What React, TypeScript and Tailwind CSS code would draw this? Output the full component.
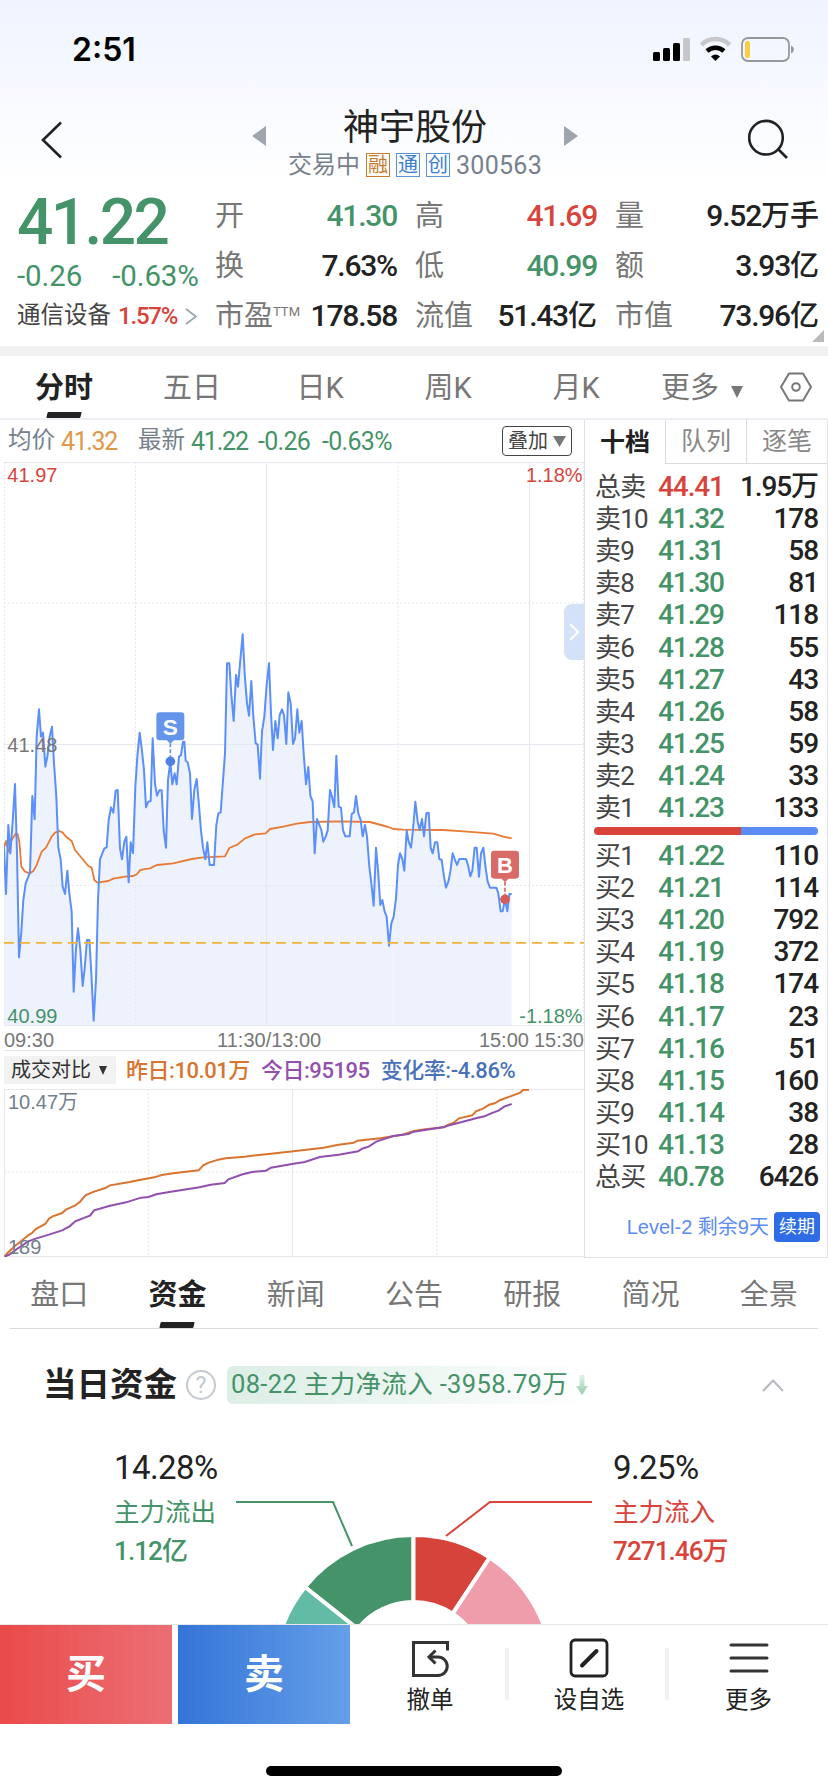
import React, { useState } from 'react';

interface Quote {
  label: string;
  price: string;
  volume: string;
  tone?: 'up' | 'down';
}

interface Stat {
  label: string;
  sup?: string;
  value: string;
  unit?: string;
  color?: string;
}

const stats: Stat[][] = [
  [
    { label: '开', value: '41.30', color: 'text-[#459368]' },
    { label: '换', value: '7.63%' },
    { label: '市盈', sup: 'TTM', value: '178.58' },
  ],
  [
    { label: '高', value: '41.69', color: 'text-[#d8443c]' },
    { label: '低', value: '40.99', color: 'text-[#459368]' },
    { label: '流值', value: '51.43', unit: '亿' },
  ],
  [
    { label: '量', value: '9.52', unit: '万手' },
    { label: '额', value: '3.93', unit: '亿' },
    { label: '市值', value: '73.96', unit: '亿' },
  ],
];

const statWidths = ['w-[182px]', 'w-[182px]', 'w-[204px]'];

const sells: Quote[] = [
  { label: '总卖', price: '44.41', volume: '1.95万', tone: 'up' },
  { label: '卖10', price: '41.32', volume: '178' },
  { label: '卖9', price: '41.31', volume: '58' },
  { label: '卖8', price: '41.30', volume: '81' },
  { label: '卖7', price: '41.29', volume: '118' },
  { label: '卖6', price: '41.28', volume: '55' },
  { label: '卖5', price: '41.27', volume: '43' },
  { label: '卖4', price: '41.26', volume: '58' },
  { label: '卖3', price: '41.25', volume: '59' },
  { label: '卖2', price: '41.24', volume: '33' },
  { label: '卖1', price: '41.23', volume: '133' },
];

const buys: Quote[] = [
  { label: '买1', price: '41.22', volume: '110' },
  { label: '买2', price: '41.21', volume: '114' },
  { label: '买3', price: '41.20', volume: '792' },
  { label: '买4', price: '41.19', volume: '372' },
  { label: '买5', price: '41.18', volume: '174' },
  { label: '买6', price: '41.17', volume: '23' },
  { label: '买7', price: '41.16', volume: '51' },
  { label: '买8', price: '41.15', volume: '160' },
  { label: '买9', price: '41.14', volume: '38' },
  { label: '买10', price: '41.13', volume: '28' },
  { label: '总买', price: '40.78', volume: '6426' },
];

const periodTabs = ['分时', '五日', '日K', '周K', '月K'];
const depthTabs = ['十档', '队列', '逐笔'];
const infoTabs = ['盘口', '资金', '新闻', '公告', '研报', '简况', '全景'];

// chart space is 3 units per pixel
const priceLine =
  '12,680 18,822 25,615 31,700 38,605 45,492 51,700 57,1012 64,935 70,840 77,790 90,757 97,528 104,598 110,350 117,268 123,350 129,338 136,440 142,410 149,350 156,320 162,430 169,530 175,683 182,718 188,800 195,822 202,752 208,820 215,875 221,1115 228,985 234,925 241,990 248,1098 254,1045 261,960 268,960 274,1060 281,1202 288,1080 294,840 300,718 313,685 320,682 326,600 333,562 340,578 347,512 353,510 360,685 366,718 373,665 379,650 386,787 392,667 399,700 406,500 412,410 419,338 425,385 432,450 438,562 445,545 452,543 458,355 465,492 471,527 478,511 485,511 491,630 498,683 504,480 511,425 517,493 524,460 530,493 537,410 543,405 549,365 553,365 557,422 563,427 570,460 576,597 583,510 590,477 596,545 603,632 609,683 616,718 622,667 629,735 642,735 649,615 655,580 662,577 668,495 675,400 681,130 688,130 694,225 701,303 708,165 714,200 721,120 728,43 734,160 741,250 747,287 754,183 760,290 767,370 773,374 780,476 786,335 793,290 800,195 807,130 813,280 819,390 826,303 833,355 839,285 846,268 852,285 859,372 865,217 872,250 879,372 885,355 892,268 898,338 905,303 911,400 918,493 925,441 931,527 938,545 944,700 951,597 957,612 964,630 970,665 977,650 983,632 990,510 996,530 1003,562 1009,407 1016,560 1023,563 1029,630 1036,649 1049,649 1055,582 1062,577 1068,528 1075,580 1082,600 1088,649 1095,615 1101,650 1108,740 1114,790 1121,857 1128,683 1134,750 1141,855 1147,840 1154,875 1160,890 1167,977 1174,910 1181,890 1188,835 1194,735 1200,700 1207,717 1213,752 1220,632 1226,665 1233,683 1239,630 1246,545 1253,605 1259,630 1266,597 1272,649 1279,580 1286,578 1292,683 1298,700 1305,667 1312,667 1318,717 1325,720 1332,770 1338,803 1345,785 1351,755 1358,700 1364,717 1371,735 1378,717 1398,717 1404,735 1411,769 1417,752 1424,683 1430,683 1437,770 1443,700 1450,683 1457,745 1463,785 1470,803 1489,803 1495,820 1502,874 1508,874 1515,838 1522,874 1528,822 1535,822';

const averageLine =
  '12,683 18,663 25,695 35,660 48,640 53,643 58,665 64,740 75,755 90,760 100,753 110,735 125,695 138,683 155,650 165,638 178,633 188,638 198,650 215,663 225,690 240,708 265,738 275,743 283,780 292,788 325,783 340,776 375,770 400,768 410,763 420,751 430,748 450,745 470,735 520,730 575,717 610,712 675,709 688,684 712,674 735,655 765,643 797,640 810,627 850,620 890,611 930,606 1020,604 1110,606 1165,621 1180,627 1210,629 1330,630 1390,634 1480,641 1510,650 1535,655';

const yesterdayLine =
  '12,741 20,730 40,708 50,700 75,677 85,670 95,658 120,643 130,627 140,620 165,610 175,600 200,587 212,577 228,556 250,546 280,535 292,527 345,517 360,513 410,503 430,496 460,491 528,482 540,467 555,459 580,450 600,446 650,441 720,432 780,425 860,414 880,410 900,405 940,399 950,393 1010,386 1070,375 1100,364 1130,359 1180,353 1190,346 1205,340 1220,326 1255,317 1265,305 1285,296 1300,285 1315,281 1330,271 1383,249 1390,241 1406,240';

const todayLine =
  '12,741 25,735 45,718 75,695 95,687 130,675 165,662 185,650 200,635 240,617 250,602 290,589 335,578 375,564 395,562 415,554 450,547 530,533 560,525 597,520 607,509 645,494 670,487 707,483 720,474 780,462 810,457 850,442 900,435 952,425 962,417 980,411 1000,396 1045,379 1085,373 1100,366 1180,352 1200,345 1270,324 1288,320 1305,311 1325,303 1340,291 1360,283';

const StatusBar: React.FC = () => (
  <div className="flex h-[98px] items-center justify-between pl-[72px] pr-[34px]">
    <span className="mt-[2px] font-['Inter'] text-[32px] font-semibold leading-none text-black">2:51</span>
    <svg width="142" height="26" viewBox="0 0 142 26">
      <rect x="1" y="16" width="7" height="9" rx="1.5" />
      <rect x="11" y="12" width="7" height="13" rx="1.5" />
      <rect x="21" y="7" width="7" height="18" rx="1.5" />
      <rect x="31" y="2" width="7" height="23" rx="1.5" fill="#c5c7cb" />
      <path d="M49.500 8.800A20 20 0 0 1 77.500 8.800" fill="none" stroke="#c5c7cb" strokeWidth="4.5" />
      <path d="M55 15A12.500 12.500 0 0 1 72 15" fill="none" stroke="#000" strokeWidth="4.5" />
      <path d="M59 20.500Q63.500 16.500 68 20.500L63.500 25z" />
      <rect x="90" y="2" width="47" height="23" rx="6" fill="none" stroke="#96989c" strokeWidth="1.8" />
      <rect x="93" y="5" width="5" height="17" rx="2" fill="#f7ce46" />
      <path d="M139 9.500Q142 11 142 13.500Q142 16 139 17.500z" fill="#96989c" />
    </svg>
  </div>
);

const TitleBar: React.FC = () => (
  <header className="flex h-[88px] items-start justify-between pl-[39px] pr-[36px]">
    <svg className="mt-[23px]" width="26" height="38" viewBox="0 0 26 38" fill="none" stroke="#222" strokeWidth="2.6">
      <path d="M22 1.500L4 19L22 36.500" />
    </svg>
    <div className="ml-[17px] flex flex-col items-center">
      <div className="flex items-center">
        <svg width="14" height="20" viewBox="0 0 14 20" className="mt-[23px]">
          <path d="M14 0V20L0 10z" fill="#9ea5ad" />
        </svg>
        <h1 className="mx-[77px] mt-[11px] h-[42px] text-[36px] leading-[38px] text-[#222]">神宇股份</h1>
        <svg width="14" height="20" viewBox="0 0 14 20" className="mt-[23px]">
          <path d="M0 0V20L14 10z" fill="#9ea5ad" />
        </svg>
      </div>
      <div className="mt-[2px] flex h-[24px] items-center gap-[6px] text-[24px] leading-none text-[#76818c]">
        <span>交易中</span>
        <span className="flex h-[24px] w-[24px] items-center justify-center border border-[#c47b2e] text-[20px] text-[#c47b2e]">融</span>
        <span className="flex h-[24px] w-[24px] items-center justify-center border border-[#5b93d8] text-[20px] text-[#3b7fd0]">通</span>
        <span className="flex h-[24px] w-[24px] items-center justify-center border border-[#5b93d8] text-[20px] text-[#3b7fd0]">创</span>
        <span className="text-[25px] tracking-[0.3px]">300563</span>
      </div>
    </div>
    <svg className="mt-[20px]" width="44" height="44" viewBox="0 0 44 44" fill="none" stroke="#222" strokeWidth="2.6">
      <circle cx="18" cy="19.700" r="16.800" />
      <path d="M30.500 31.500L39 40" />
    </svg>
  </header>
);

const Summary: React.FC = () => (
  <section className="relative flex h-[160px] pl-[17px] pt-[5px]">
    <div className="w-[198px]">
      <div className="h-[76px] text-[64px] font-medium leading-[64px] tracking-[-2.6px] text-[#459368]">41.22</div>
      <div className="-mt-[7px] flex h-[32px] items-center gap-[32px] text-[29.500px] leading-[32px] tracking-[-0.1px] text-[#459368]">
        <span className="-mr-[2px]">-0.26</span>
        <span>-0.63%</span>
      </div>
      <div className="mt-[9px] flex h-[30px] items-center text-[23.500px] leading-none text-[#444]">
        通信设备
        <span className="ml-[7px] text-[24px] font-medium tracking-[-1.2px] text-[#d8443c]">1.57%</span>
        <svg className="ml-[8px]" width="12" height="17" viewBox="0 0 12 17" fill="none" stroke="#9aa2ad" strokeWidth="1.600">
          <path d="M1 1L11 8.500L1 16" />
        </svg>
      </div>
    </div>
    <div className="flex gap-[18px]">
      {stats.map((column, i) => (
        <div key={i} className={statWidths[i]}>
          {column.map(stat => (
            <div key={stat.label} className="flex h-[50px] items-center justify-between leading-none">
              <span className="flex text-[29px] text-[#777]">
                {stat.label}
                {stat.sup && <sup className="top-0 mt-[3px] text-[13px] leading-none">{stat.sup}</sup>}
              </span>
              <span className={`flex items-center text-[30px] font-medium tracking-[-1.2px] ${stat.color ?? 'text-[#222]'}`}>
                {stat.value}
                {stat.unit && <span className="text-[29px] tracking-normal">{stat.unit}</span>}
              </span>
            </div>
          ))}
        </div>
      ))}
    </div>
    <svg className="absolute bottom-[4px] right-[4px]" width="12" height="12" viewBox="0 0 12 12">
      <path d="M12 0V12H0z" fill="#bbb" />
    </svg>
  </section>
);

const TabMark: React.FC = () => <span className="absolute bottom-0 h-[6px] w-[34px] -skew-x-[14deg] rounded-[1px] bg-[#222]" />;

const PeriodTabs: React.FC = () => {
  const [active, setActive] = useState('分时');

  return (
    <nav className="flex h-[64px] border-b-2 border-[#eeeff4] text-[29px] leading-none text-[#777]">
      {periodTabs.map(tab => (
        <button
          key={tab}
          onClick={() => setActive(tab)}
          className={`relative flex w-[128px] items-center justify-center pt-[3px] ${active === tab ? 'font-bold text-[#222]' : ''}`}
        >
          {tab}
          {active === tab && <TabMark />}
        </button>
      ))}
      <button className="ml-[21px] flex items-center pt-[3px]">
        更多
        <svg className="ml-[12px] mt-[6px]" width="12" height="12" viewBox="0 0 12 12">
          <path d="M0 0H12L6 12z" fill="#777" />
        </svg>
      </button>
      <button className="ml-[37px] flex items-center">
        <svg width="32" height="30" viewBox="0 0 32 30" fill="none" stroke="#777" strokeWidth="2" strokeLinejoin="round">
          <path d="M9 1.500H23L31 15L23 28.500H9L1 15z" />
          <circle cx="16" cy="15" r="3.800" />
        </svg>
      </button>
    </nav>
  );
};

const PriceChart: React.FC = () => (
  <div className="relative h-[565px]">
    <svg width="580" height="564" viewBox="12 -474 1740 1692" className="ml-[4px] block font-['Liberation_Sans']">
      <polygon points={`12,1218 ${priceLine} 1535,1218`} fill="#edf2fd" />
      <g stroke="#e6e8f0" strokeWidth="3" fill="none">
        <path d="M12 -472.500H1752M12 373.500H1752M12 1217H1752M799.500 -474V1218M1588.500 -474V1218" />
        <path d="M12 -51H1752M12 796.500H1752M13.500 -474V1218M406.500 -474V1218M1194 -474V1218M1750.500 -474V1218" strokeDasharray="6 6" />
      </g>
      <polyline points={averageLine} fill="none" stroke="#e87b35" strokeWidth="5.500" strokeLinejoin="round" />
      <polyline points={priceLine} fill="none" stroke="#5b8ff9" strokeWidth="6" strokeLinejoin="round" />
      <path d="M12 968.500H1752" stroke="#f3b13c" strokeWidth="5.500" strokeDasharray="30 18" />

      <g fontSize="60" fill="#777">
        <text x="22" y="-414" fill="#d8443c">41.97</text>
        <text x="22" y="396">41.48</text>
        <text x="22" y="1210" fill="#459368">40.99</text>
        <text x="1748" y="-414" fill="#d8443c" textAnchor="end">1.18%</text>
        <text x="1748" y="1210" fill="#459368" textAnchor="end">-1.18%</text>
      </g>

      <path d="M511 370V412" stroke="#6495ea" strokeWidth="5" strokeDasharray="12 6" />
      <circle cx="511" cy="424" r="14.500" fill="#4f82e0" />
      <path d="M499 359H523L511 371z" fill="#6495ea" />
      <rect x="469" y="277" width="84" height="84" rx="10" fill="#6495ea" />
      <text x="511" y="345" textAnchor="middle" fontSize="68" fontWeight="700" fill="#fff">S</text>

      <path d="M1515 785V826" stroke="#d86a67" strokeWidth="5" strokeDasharray="12 6" />
      <circle cx="1515" cy="838" r="14.500" fill="#d65c5a" />
      <path d="M1503 775H1527L1515 787z" fill="#d86a67" />
      <rect x="1473" y="692" width="84" height="84" rx="10" fill="#d86a67" />
      <text x="1515" y="760" textAnchor="middle" fontSize="66" fontWeight="700" fill="#fff">B</text>
    </svg>
    <button className="absolute right-0 top-[142px] flex h-[56px] w-[20px] items-center justify-center rounded-l-[8px] bg-[#d3e1f9]">
      <svg width="10" height="18" viewBox="0 0 10 18" fill="none" stroke="#fff" strokeWidth="2">
        <path d="M1 1L9 9L1 17" />
      </svg>
    </button>
  </div>
);

const VolumeChart: React.FC = () => (
  <div className="relative ml-[4px] h-[168px] text-[20px] leading-none text-[#72808c]">
    <svg width="580" height="168" viewBox="10.6 238 1541.600 504" preserveAspectRatio="none" className="block">
      <g stroke="#e8e8ec" fill="none" strokeWidth="1.200">
        <path d="M10 239H1552M10 741H1552M777.500 238V742M12 238V742" vectorEffect="non-scaling-stroke" />
        <path d="M10 487.500H1552M394 238V742M1161 238V742" strokeDasharray="2 2" vectorEffect="non-scaling-stroke" />
      </g>
      <polyline points={yesterdayLine} fill="none" stroke="#d9742f" strokeWidth="2" vectorEffect="non-scaling-stroke" />
      <polyline points={todayLine} fill="none" stroke="#924fae" strokeWidth="2" vectorEffect="non-scaling-stroke" />
    </svg>
    <span className="absolute left-[4px] top-[3px] font-['Liberation_Sans','Noto_Sans_CJK_SC',sans-serif]">10.47万</span>
    <span className="absolute bottom-0 left-[4px] font-['Liberation_Sans',sans-serif]">189</span>
  </div>
);

const ChartPanel: React.FC = () => (
  <div className="h-[838px] w-[585px] border-r border-[#dfe0e6]">
    <div className="flex h-[42px] items-center pl-[8px] text-[23.500px] leading-none text-[#76818c]">
      均价
      <span className="ml-[6px] w-[77px] text-[25px] tracking-[-1.400px] text-[#e0984a]">41.32</span>
      最新
      <span className="ml-[6px] flex text-[25px] tracking-[-0.700px] text-[#459368]">
        <span className="w-[67px] tracking-[-1.200px]">41.22</span>
        <span className="w-[64px]">-0.26</span>
        <span>-0.63%</span>
      </span>
      <button className="ml-auto mr-[12px] flex h-[30px] w-[70px] items-center justify-center gap-[5px] rounded-[4px] border border-[#444] text-[20px] text-[#444]">
        叠加
        <svg width="13" height="11" viewBox="0 0 13 11">
          <path d="M0 0H13L6.500 11z" fill="#777" />
        </svg>
      </button>
    </div>
    <PriceChart />
    <div className="ml-[4px] flex h-[24px] items-center border-b border-[#e1e3f0] pt-[2px] font-['Liberation_Sans',sans-serif] text-[20px] leading-none text-[#777]">
      <span>09:30</span>
      <span className="ml-[163px]">11:30/13:00</span>
      <span className="ml-auto">15:00</span>
      <span className="ml-[5px]">15:30</span>
    </div>
    <div className="ml-[4px] flex h-[38px] items-center pt-[2px] text-[22px] font-medium leading-none tracking-[-0.45px]">
      <button className="-mt-[2px] flex h-[28px] w-[112px] items-center justify-between bg-[#f2f2f2] pl-[7px] pr-[9px] text-[20px] font-normal tracking-normal text-[#333]">
        成交对比
        <svg width="8" height="9" viewBox="0 0 8 9">
          <path d="M0 0H8L4 9z" fill="#333" />
        </svg>
      </button>
      <span className="ml-[10px] text-[#d9742f]">昨日:10.01万</span>
      <span className="ml-[11px] text-[#924fae]">今日:95195</span>
      <span className="ml-[11px] text-[#4a72b8]">变化率:-4.86%</span>
    </div>
    <VolumeChart />
  </div>
);

const QuoteRows: React.FC<{ quotes: Quote[] }> = ({ quotes }) => (
  <>
    {quotes.map(quote => (
      <div key={quote.label} className="flex h-[32.100px] items-center pl-[10px] pr-[9px] pt-[2px] text-[28px] font-medium leading-none tracking-[-1.100px]">
        <span className="w-[63px] text-[26px] font-normal tracking-[-0.8px] text-[#444]">{quote.label}</span>
        <span className={quote.tone === 'up' ? 'text-[#d8443c]' : 'text-[#459368]'}>{quote.price}</span>
        <span className="ml-auto text-[#222]">{quote.volume}</span>
      </div>
    ))}
  </>
);

const DepthPanel: React.FC = () => {
  const [active, setActive] = useState('十档');

  return (
    <aside className="h-[838px] flex-1 border-b border-r border-[#e2e2e4]">
      <div className="flex h-[44px] text-[25px] leading-none">
        {depthTabs.map(tab => (
          <button
            key={tab}
            onClick={() => setActive(tab)}
            className={`flex flex-1 items-center justify-center ${
              active === tab ? 'font-bold text-[#222]' : 'border-b border-l border-[#dcdcde] text-[#888]'
            }`}
          >
            {tab}
          </button>
        ))}
      </div>
      <div className="mt-[6px]">
        <QuoteRows quotes={sells} />
      </div>
      <div className="mx-[9px] mt-[4px] flex h-[8px] overflow-hidden rounded-full">
        <div className="w-[147px] bg-[#d8443c]" />
        <div className="flex-1 bg-[#5b8bf5]" />
      </div>
      <div className="mt-[4px]">
        <QuoteRows quotes={buys} />
      </div>
      <div className="mt-[20px] flex h-[30px] items-center justify-end gap-[5px] pr-[7px] font-['Liberation_Sans','Noto_Sans_CJK_SC',sans-serif] text-[20px] leading-none text-[#5b8bf5]">
        Level-2 剩余9天
        <button className="flex h-[30px] w-[46px] items-center justify-center rounded-[4px] bg-[#2f6de6] text-[18px] text-white">续期</button>
      </div>
    </aside>
  );
};

const InfoTabs: React.FC = () => {
  const [active, setActive] = useState('资金');

  return (
    <nav className="relative flex h-[70px] text-[29px] leading-none text-[#777]">
      {infoTabs.map(tab => (
        <button
          key={tab}
          onClick={() => setActive(tab)}
          className={`relative flex flex-1 items-center justify-center pt-[4px] ${active === tab ? 'font-bold text-[#222]' : ''}`}
        >
          {tab}
          {active === tab && <TabMark />}
        </button>
      ))}
      <span className="absolute bottom-[-1px] left-[10px] right-[10px] h-px bg-[#dadada]" />
    </nav>
  );
};

const CashFlow: React.FC = () => (
  <section className="h-[296px] overflow-hidden pt-[38px]">
    <div className="flex h-[38px] items-center pl-[43px] pr-[44px] leading-none">
      <h2 className="text-[33.500px] font-bold text-[#222]">当日资金</h2>
      <span className="ml-[9px] flex h-[30px] w-[30px] items-center justify-center rounded-full border-2 border-[#c5c9d0] text-[23px] text-[#c5c9d0]">?</span>
      <span className="ml-[11px] flex h-[38px] w-[370px] items-center rounded-[6px] bg-linear-to-r from-[#dceee5] to-white pl-[4px] text-[25.500px] tracking-[0.35px] text-[#459368]">
        08-22 主力净流入 -3958.79万
        <svg className="ml-[8px]" width="12" height="20" viewBox="0 0 12 20">
          <defs>
            <linearGradient id="drop" x1="0" y1="0" x2="0" y2="1">
              <stop offset="0" stopColor="#e3f2ea" />
              <stop offset="1" stopColor="#93cbac" />
            </linearGradient>
          </defs>
          <path d="M3.500 0H8.500V11H12L6 20L0 11H3.500z" fill="url(#drop)" />
        </svg>
      </span>
      <svg className="ml-auto" width="22" height="13" viewBox="0 0 22 13" fill="none" stroke="#b4b9c0" strokeWidth="2">
        <path d="M1 12L11 1.500L21 12" />
      </svg>
    </div>
    <div className="flex pl-[114px] pt-[45px]">
      <div className="w-[122px] text-[#459368]">
        <div className="flex h-[36px] items-center text-[33px] leading-none tracking-[-0.6px] text-[#222]">14.28%</div>
        <div className="mt-[10px] flex h-[36px] items-center text-[25.500px] leading-none">主力流出</div>
        <div className="mt-[2px] flex h-[36px] items-center text-[26px] font-medium leading-none tracking-[-0.9px]">1.12亿</div>
      </div>
      <svg width="356" height="175" viewBox="236 1449 356 175">
        <g stroke="#fff" strokeWidth="4">
          <path d="M413.500 1535A139 139 0 0 0 304.900 1587L357.600 1628.900A71.500 71.500 0 0 1 413.500 1602z" fill="#459368" />
          <path d="M304.900 1587A139 139 0 0 0 274.500 1673.500H342A71.500 71.500 0 0 1 357.600 1628.900z" fill="#62bba4" />
          <path d="M413.500 1535A139 139 0 0 1 489.800 1557.500L452.700 1613.700A71.500 71.500 0 0 0 413.500 1602z" fill="#d5433b" />
          <path d="M489.800 1557.500A139 139 0 0 1 552.500 1673.500H485A71.500 71.500 0 0 0 452.700 1613.700z" fill="#f09dab" />
        </g>
        <path d="M236 1502H333L352 1546" fill="none" stroke="#459368" strokeWidth="2" />
        <path d="M592 1502H490L446 1536" fill="none" stroke="#d8443c" strokeWidth="2" />
      </svg>
      <div className="ml-[21px] text-[#d8443c]">
        <div className="flex h-[36px] items-center text-[33px] leading-none tracking-[-0.6px] text-[#222]">9.25%</div>
        <div className="mt-[10px] flex h-[36px] items-center text-[25.500px] leading-none">主力流入</div>
        <div className="mt-[2px] flex h-[36px] items-center text-[26px] font-medium leading-none tracking-[-0.9px]">7271.46万</div>
      </div>
    </div>
  </section>
);

const ActionBar: React.FC = () => (
  <footer className="flex h-[100px] border-t border-[#e8e8e8] text-[23.500px] leading-none text-[#222]">
    <button className="w-[172px] bg-linear-to-r from-[#ea4a4a] to-[#eb6e74] text-[40px] font-bold text-white">买</button>
    <button className="ml-[6px] w-[172px] bg-linear-to-r from-[#3574d8] to-[#649fe7] text-[40px] font-bold text-white">卖</button>
    <button className="flex w-[155px] flex-col items-center pl-[5px] pt-[13px]">
      <svg width="40" height="40" viewBox="0 0 40 40" fill="none" stroke="#333" strokeWidth="3">
        <path d="M37.500 12.500V4.500H3.500V37.500H28A9.250 9.250 0 0 0 28 19H19" />
        <path d="M25.500 12.500L19 19L25.500 25.500" />
      </svg>
      <span className="mt-[11px]">撤单</span>
    </button>
    <span className="mt-[23px] h-[52px] w-[4px] bg-[#f1f1f3]" />
    <button className="flex w-[156px] flex-col items-center pl-[4px] pt-[13px]">
      <svg width="40" height="40" viewBox="0 0 40 40" fill="none" stroke="#222" strokeWidth="2.8">
        <rect x="2" y="2" width="36" height="36" rx="4" />
        <path d="M13 27.500L27.500 13" strokeWidth="4" strokeLinecap="round" />
      </svg>
      <span className="mt-[11px]">设自选</span>
    </button>
    <span className="mt-[23px] h-[52px] w-[4px] bg-[#f1f1f3]" />
    <button className="flex w-[159px] flex-col items-center pt-[13px]">
      <svg width="40" height="40" viewBox="0 0 40 40" fill="none" stroke="#333" strokeWidth="3" strokeLinecap="round">
        <path d="M2 7H38M2 20H38M2 33H38" />
      </svg>
      <span className="mt-[11px]">更多</span>
    </button>
  </footer>
);

const App: React.FC = () => (
  <div className="h-[1792px] w-[828px] overflow-hidden bg-white font-['Roboto','Noto_Sans_CJK_SC',sans-serif]">
    <div className="bg-linear-to-b from-[#eff4ff] to-white">
      <StatusBar />
      <TitleBar />
    </div>
    <Summary />
    <div className="h-[10px] bg-[#f2f2f2]" />
    <PeriodTabs />
    <main className="flex">
      <ChartPanel />
      <DepthPanel />
    </main>
    <InfoTabs />
    <CashFlow />
    <ActionBar />
    <div className="mx-auto mt-[42px] h-[10px] w-[296px] rounded-full bg-black" />
  </div>
);

export default App;
